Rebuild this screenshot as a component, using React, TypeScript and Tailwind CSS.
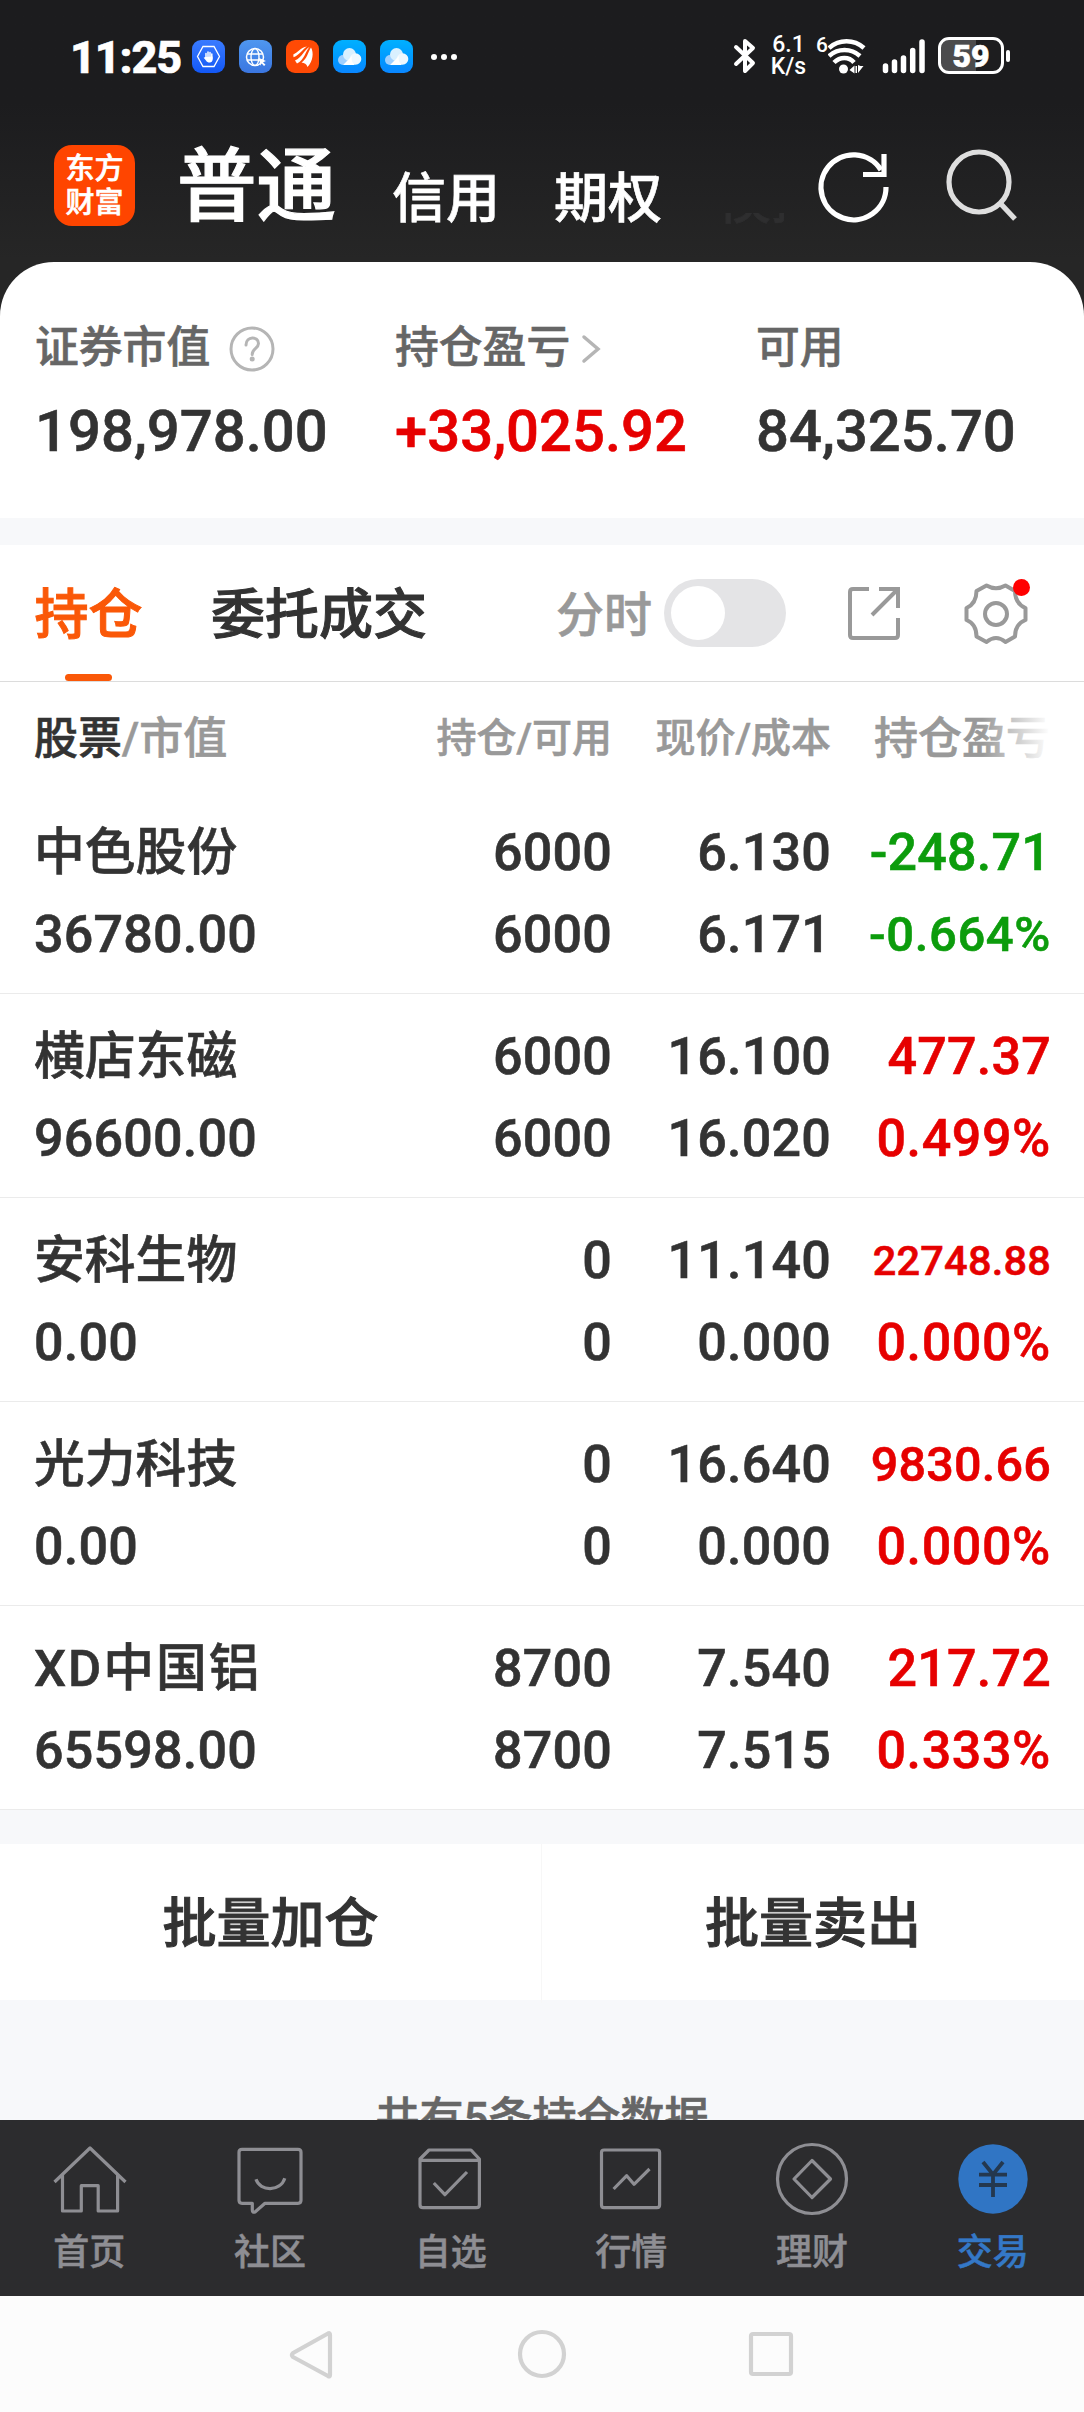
import { ReactNode, useState } from "react";
import clsx from "clsx";

type Holding = {
  name: string,
  marketValue: string,
  amount: string,
  available: string,
  price: string,
  cost: string,
  profit: string,
  profitRate: string,
  nameClass?: string,
  profitClass?: string,
  rateClass?: string,
  down?: boolean,
}

const holdings: Holding[] = [
  { name: "中色股份", marketValue: "36780.00", amount: "6000", available: "6000", price: "6.130", cost: "6.171", profit: "-248.71", profitRate: "-0.664%", rateClass: "text-[49px]", down: true },
  { name: "横店东磁", marketValue: "96600.00", amount: "6000", available: "6000", price: "16.100", cost: "16.020", profit: "477.37", profitRate: "0.499%" },
  { name: "安科生物", marketValue: "0.00", amount: "0", available: "0", price: "11.140", cost: "0.000", profit: "22748.88", profitRate: "0.000%", profitClass: "text-[41.5px]" },
  { name: "光力科技", marketValue: "0.00", amount: "0", available: "0", price: "16.640", cost: "0.000", profit: "9830.66", profitRate: "0.000%", profitClass: "text-[48.5px]" },
  { name: "XD中国铝", marketValue: "65598.00", amount: "8700", available: "8700", price: "7.540", cost: "7.515", profit: "217.72", profitRate: "0.333%", nameClass: "tracking-[2px]" },
]

const AppBadge = ({ className, children }: { className: string, children: ReactNode }) => (
  <div className={clsx("w-[33px] h-[33px] rounded-[9px] overflow-hidden", className)}>
    <svg viewBox="0 0 33 33" width="33" height="33" fill="none">{children}</svg>
  </div>
)

const Cloud = () => (
  <>
    <circle cx="10" cy="20" r="5" fill="#9fd0ff" />
    <circle cx="16.5" cy="14.5" r="6.5" fill="#d9f0ff" />
    <circle cx="22.5" cy="19" r="5.8" fill="#eef8ff" />
    <path d="M10 25h12c-3-2-4-5-3-9z" fill="#fff" />
  </>
)

const StatusBar = () => (
  <div className="h-[112px] flex items-start justify-between pl-[70px] pr-[74px] text-white">
    <div className="flex items-center h-[113px]">
      <span className="w-[122px] text-[45px] leading-[46px] font-extrabold tracking-[-1.2px] pt-[2px]">11:25</span>
      <div className="flex items-center gap-[14px]">
        <AppBadge className="bg-linear-to-b from-[#3a7bff] to-[#1257f5]">
          <path d="M11 6.5h11l5.5 10-5.5 10H11l-5.5-10z" stroke="#fff" strokeWidth="1.3" />
          <path d="M14 13.5v5M16 12v6M18 12.5V18M19.8 14v5" stroke="#fff" strokeWidth="1.5" strokeLinecap="round" />
          <path d="M13.2 17l7.4-.5v3c0 2-1.3 3-2.9 3-1.7 0-2.9-.8-3.7-2.1l-2.3-2.7z" fill="#fff" />
        </AppBadge>
        <AppBadge className="bg-linear-to-b from-[#4f97f0] to-[#3b76e0]">
          <circle cx="16" cy="17" r="8.5" stroke="#fff" strokeWidth="1.5" />
          <ellipse cx="16" cy="17" rx="4" ry="8.5" stroke="#fff" strokeWidth="1.4" />
          <path d="M8 14h16M8 20h16" stroke="#fff" strokeWidth="1.5" />
          <path d="M20 18l7 3-3 1.2 2.5 2.6-1.5 1.2-2.5-2.8-1.2 2.5z" fill="#fff" />
        </AppBadge>
        <AppBadge className="bg-[#ff4a05]">
          <path d="M7.3 14.6C12 12 15 7.5 21 6.5c-4 2.5-7 8-13.5 10.8z" fill="#fff" />
          <path d="M9 20.5C16 17.5 18 10 23.5 7c-4 4-5 13-12.5 16.5z" fill="#fff" />
          <path d="M15.5 22.5C21 19 22 12 25 7.5c3 5 2 14-3.5 19.5-1-3-3-4-6-4.5z" fill="#fff" />
        </AppBadge>
        <AppBadge className="bg-linear-to-b from-[#00b0ff] to-[#0a86ff]"><Cloud /></AppBadge>
        <AppBadge className="bg-linear-to-b from-[#00b0ff] to-[#0a86ff]"><Cloud /></AppBadge>
      </div>
      <div className="flex gap-[4px] ml-[18px]">
        <i className="w-[6px] h-[6px] rounded-full bg-white" />
        <i className="w-[6px] h-[6px] rounded-full bg-white" />
        <i className="w-[6px] h-[6px] rounded-full bg-white" />
      </div>
    </div>

    <div className="flex items-center h-[111px]">
      <svg width="24" height="38" viewBox="0 0 24 38" fill="none" stroke="#fff" strokeWidth="4" strokeLinejoin="round" strokeLinecap="round">
        <path d="M3 10l17 16-8 8V4l8 7L3 27" />
      </svg>
      <div className="ml-[13px] w-[37px] flex flex-col items-center text-[23px] leading-[22px] font-medium [-webkit-text-stroke:0px]">
        <span>6.1</span>
        <span>K/s</span>
      </div>
      <span className="ml-[9px] w-[11px] text-[21px] leading-none font-medium -mt-[20px] [-webkit-text-stroke:0px]">6</span>
      <svg className="ml-[1px]" width="40" height="38" viewBox="0 0 40 38" fill="none" stroke="#fff" strokeWidth="4.5">
        <path d="M1 11c10-9 25-9 35 0M1 19c9-8 22-8 31 0M6 25.5c6-6 15-6 20 0" />
        <circle cx="15.5" cy="32" r="4.5" fill="#fff" stroke="none" />
        <path d="M26.5 28.5v8l-5-3.5zM27.5 29H29v7h-1.5zM30 28v8l5.5-7h-3z" fill="#fff" stroke="none" />
      </svg>
      <svg className="ml-[14px]" width="44" height="36" viewBox="0 0 44 36" stroke="#fff" strokeWidth="5.5" strokeLinecap="round">
        <path d="M3.5 28v4.5M12.5 24v8.5M21.5 20v12.5M30.7 12.5v20M40 4v28.5" />
      </svg>
      <div className="ml-[12px] w-[66px] h-[37px] border-[3px] border-white rounded-[11px] bg-linear-to-r from-[#4b4b4d] from-[59%] to-[#1d1d1f] to-[59%] flex items-center justify-center text-[32px] leading-none font-black">
        59
      </div>
      <div className="ml-[2px] w-[4px] h-[12px] rounded-full bg-white" />
    </div>
  </div>
)

const Header = () => (
  <div className="h-[150px] flex items-start text-white font-medium whitespace-nowrap">
    <div className="ml-[54px] mt-[33px] w-[81px] h-[81px] rounded-[18px] bg-[#ff4500] flex flex-col items-center justify-center text-[29px] leading-[34px] font-medium">
      <span>东方</span>
      <span>财富</span>
    </div>
    <h1 className="ml-[42px] mt-[25px] w-[160px] text-[79.5px] leading-[100px] [-webkit-text-stroke:1.2px]">普通</h1>
    <span className="ml-[55px] mt-[53px] w-[108px] text-[54px] leading-[70px]">信用</span>
    <span className="ml-[54px] mt-[53px] w-[107px] text-[54px] leading-[70px]">期权</span>
    {/* next account type, almost faded out by the scroll edge */}
    <div className="ml-[56px] mt-[101px] w-[67px] h-[12px] overflow-hidden flex items-end text-[#2e2e2f]">
      <span className="text-[54px] leading-[70px] mb-[-11px]">模拟</span>
    </div>
    <svg className="ml-[33px] mt-[37px]" width="76" height="78" viewBox="0 0 76 78" fill="none" stroke="#fff" strokeWidth="5.2">
      <path d="M69 38A32.5 32.5 0 1 1 64 21" />
      <path d="M67 5v20.5H46" />
    </svg>
    <svg className="ml-[52px] mt-[37px]" width="76" height="78" viewBox="0 0 76 78" fill="none" stroke="#dedede" strokeWidth="5.2">
      <circle cx="34" cy="33" r="30" />
      <path d="M55 54l15 16" />
    </svg>
  </div>
)

const Summary = () => (
  <section className="h-[256px] bg-white rounded-t-[54px] flex pl-[35px] pt-[62px] font-medium">
    <div className="w-[360px]">
      <div className="flex items-center h-[50px] text-[43.8px] text-[#666]">
        证券市值
        <svg className="ml-[18px]" width="48" height="48" viewBox="0 0 48 48" fill="none" stroke="#b5b5b5" strokeWidth="3">
          <circle cx="24" cy="24" r="21" />
          <path d="M18 20c0-9 12.5-9 12.5-1.500 0 5-6.300 5-6.300 11" strokeLinecap="round" />
          <circle cx="24.2" cy="34" r="2.5" fill="#b5b5b5" stroke="none" />
        </svg>
      </div>
      <p className="mt-[25px] text-[58px] leading-[64px] text-[#333]">198,978.00</p>
    </div>
    <div className="w-[361px]">
      <div className="flex items-center h-[50px] text-[43.8px] text-[#666]">
        持仓盈亏
        <svg className="ml-[11px]" width="22" height="32" viewBox="0 0 22 32" fill="none" stroke="#b5b5b5" strokeWidth="3.5" strokeLinecap="round">
          <path d="M3 4l14 12L3 28" />
        </svg>
      </div>
      <p className="mt-[25px] text-[58px] leading-[64px] text-[#e60000]">+33,025.92</p>
    </div>
    <div>
      <div className="flex items-center h-[50px] text-[43.8px] text-[#666]">可用</div>
      <p className="mt-[25px] text-[58px] leading-[64px] text-[#333]">84,325.70</p>
    </div>
  </section>
)

const Tabs = () => {
  const [intraday, setIntraday] = useState(false);

  return (
    <div className="h-[137px] bg-white border-b border-[#dcdcdc] flex pl-[34px] font-medium text-[54px] leading-[70px] whitespace-nowrap">
      <div className="w-[109px] flex flex-col items-center justify-between pt-[36px] text-[#fa5808] [-webkit-text-stroke:1px]">
        <span>持仓</span>
        <i className="w-[47px] h-[7px] rounded-full bg-[#fa5808]" />
      </div>
      <span className="ml-[68px] mt-[36px] w-[216px] text-[#333] [-webkit-text-stroke:1px]">委托成交</span>
      <span className="ml-[129px] mt-[36px] w-[96px] text-[48px] text-[#999]">分时</span>
      <button type="button" onClick={() => setIntraday(!intraday)} className={clsx("ml-[12px] mt-[34px] w-[122px] h-[68px] rounded-full p-[7px] flex", intraday ? "justify-end bg-[#fa5808]" : "bg-[#e4e4e6]")}>
        <i className="w-[54px] h-[54px] rounded-full bg-white" />
      </button>
      <svg className="ml-[60px] mt-[38px]" width="56" height="60" viewBox="0 0 56 60" fill="none" stroke="#999" strokeWidth="4">
        <path d="M23 6H7q-3 0-3 3v43q0 3 3 3h42q3 0 3-3V35" />
        <path d="M33 6h19v19M51 7L26 32" />
      </svg>
      <div className="relative ml-[60px] mt-[36px] w-[68px] h-[68px]">
        <svg width="68" height="68" viewBox="0 0 68 68" fill="none" stroke="#999" strokeWidth="4" strokeLinejoin="round">
          <path d="M24.5 4.5Q34 10 43.5 4.5L53 10Q53 22.5 63.5 27V39Q53 43 53 55.5L43.5 61Q34 53 24.5 61L14.5 55.5Q14.5 43 4.5 39V27Q14.5 22.5 14.5 10z" />
          <circle cx="34" cy="33" r="11" />
        </svg>
        <i className="absolute right-0 -top-[2px] w-[17px] h-[17px] rounded-full bg-[#ff0000]" />
      </div>
    </div>
  )
}

const HoldingsTable = () => (
  <section className="bg-white font-medium">
    <div className="h-[108px] pt-[5px] pl-[34px] pr-[34px] flex items-center text-[40px] text-[#999] whitespace-nowrap">
      <span className="w-[341px] text-[44px]"><b className="font-medium text-[#333]">股票</b>/市值</span>
      <span className="w-[237px] text-right">持仓/可用</span>
      <span className="w-[219px] text-right">现价/成本</span>
      <span className="relative w-[219px] text-right text-[44px]">
        持仓盈亏
        <i className="absolute right-0 inset-y-0 w-[68px] bg-linear-to-r from-transparent to-white" />
      </span>
    </div>
    {holdings.map((item) => (
      <div key={item.name} className="h-[204px] border-b border-[#ebebeb] pl-[34px] pr-[33px] pt-[22px] flex text-[52px] leading-[82px] tracking-[0.2px] text-[#333] whitespace-nowrap">
        <div className="w-[341px] flex flex-col">
          <span className={clsx("h-[82px] text-[50.8px]", item.nameClass || "tracking-normal")}>{item.name}</span>
          <span>{item.marketValue}</span>
        </div>
        <div className="w-[237px] flex flex-col text-right">
          <span>{item.amount}</span>
          <span>{item.available}</span>
        </div>
        <div className="w-[219px] flex flex-col text-right">
          <span>{item.price}</span>
          <span>{item.cost}</span>
        </div>
        <div className={clsx("w-[220px] flex flex-col text-right", item.down ? "text-[#0c9c0c]" : "text-[#e60000]")}>
          <span className={item.profitClass}>{item.profit}</span>
          <span className={clsx("tracking-[0.6px]", item.rateClass)}>{item.profitRate}</span>
        </div>
      </div>
    ))}
  </section>
)

const tabItems = [
  { label: "首页", icon: <path d="M4.5 42L40 8l35.5 34M12.5 35v36h18.8V45.7h16.9V71h19.4V35" /> },
  { label: "社区", icon: <path d="M11 9.3h56q3 0 3 3v48q0 3-3 3H34L24 72q-2.7 1-2.7-2v-6.7H11q-3 0-3-3v-48q0-3 3-3zM25 39.3c4 12.5 24.5 12.5 28.8-1" /> },
  { label: "自选", icon: <path d="M17 10h42l8.4 9v45.7q0 3-3 3H11q-3 0-3-3V19zM8 20.3h59.4M21.8 43l11.1 11.7L55 32" /> },
  { label: "行情", icon: <path d="M12 10h53q2.6 0 2.6 2.6v52.5q0 2.6-2.6 2.6H12q-2.5 0-2.5-2.6V12.6Q9.5 10 12 10zM21.6 49l13.1-13.3 7.3 8.6L57.5 29" /> },
  { label: "理财", icon: <><circle cx="39" cy="39" r="34.5" /><path d="M39 20.5L57.5 39 39 57.5 21 39z" /></> },
]

const TabBar = () => (
  <nav className="h-[176px] shrink-0 bg-[#2c2c2e] grid grid-cols-6 font-medium text-[36px] leading-[44px] text-[#8e8e93] [-webkit-text-stroke:0.5px]">
    {tabItems.map((tab) => (
      <div key={tab.label} className="flex flex-col items-center pt-[20px]">
        <svg width="80" height="80" viewBox="0 0 80 80" fill="none" stroke="#8e8e93" strokeWidth="3.2" strokeLinejoin="round">{tab.icon}</svg>
        <span className="mt-[11px] mr-[2px]">{tab.label}</span>
      </div>
    ))}
    <div className="flex flex-col items-center pt-[20px] text-[#3478c6]">
      <svg width="80" height="80" viewBox="0 0 80 80" fill="none" stroke="#24384f" strokeWidth="3.8">
        <circle cx="39" cy="39" r="34.7" fill="#3075c4" stroke="none" />
        <path d="M29 22l10 12.5L49 22M25 34.7h28M25 45h28M39 34v23" />
      </svg>
      <span className="mt-[11px] mr-[2px]">交易</span>
    </div>
  </nav>
)

const SystemNav = () => (
  <div className="h-[116px] bg-[#fcfcfc] flex items-center justify-center">
    <svg width="520" height="60" viewBox="0 0 520 60" fill="none" stroke="#d2d2d2" strokeWidth="4.2" strokeLinejoin="round">
      <path d="M46 9.5q2-1 2 1.5v40q0 2-2 1L11 33q-2-2 0-4z" />
      <circle cx="260" cy="30" r="22" />
      <rect x="469" y="10" width="40" height="40" rx="2" />
    </svg>
  </div>
)

const App = () => (
  <div className="w-[1084px] h-[2412px] overflow-hidden flex flex-col bg-[#f7f8fa] font-['Roboto','Noto_Sans_CJK_SC',sans-serif] [-webkit-text-stroke:0.6px]">
    <div className="bg-linear-to-b from-[#1c1c1e] from-[20%] to-[#262626] to-[50%] h-[518px] shrink-0">
      <StatusBar />
      <Header />
      <Summary />
    </div>
    <div className="mt-[27px] shrink-0">
      <Tabs />
      <HoldingsTable />
    </div>
    <div className="mt-[34px] h-[156px] shrink-0 bg-white grid grid-cols-2 items-center text-center font-medium text-[54px] leading-[156px] text-[#333] [-webkit-text-stroke:1px]">
      <span className="border-r border-[#f7f7f7] pt-[3px]">批量加仓</span>
      <span className="pt-[3px]">批量卖出</span>
    </div>
    <div className="h-[120px] shrink-0 overflow-hidden pt-[89px] text-center text-[44px] leading-[60px] font-medium text-[#666]">共有5条持仓数据</div>
    <TabBar />
    <SystemNav />
  </div>
)

export default App
